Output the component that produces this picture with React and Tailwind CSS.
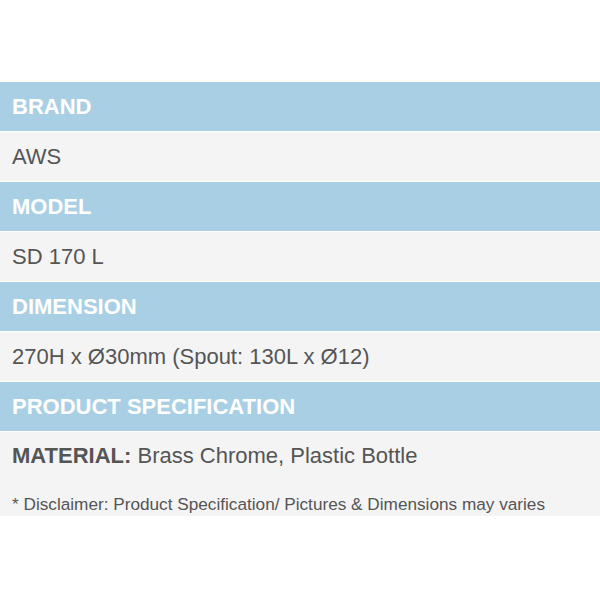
export default function App() {
  const Head = ({ children }) => (
    <div className="h-[50px] bg-[#a9cfe4] flex items-center px-3 text-white font-bold text-[22px] border-b border-white">{children}</div>
  );
  const Row = ({ children }) => (
    <div className="h-[50px] bg-[#f4f4f4] flex items-center px-3 text-[#555] text-[22px] border-b border-white">{children}</div>
  );
  return (
    <div className="w-[600px] h-[600px] bg-white pt-[82px]" style={{ fontFamily: '"Liberation Sans", Arial, sans-serif' }}>
      <Head>BRAND</Head>
      <Row>AWS</Row>
      <Head>MODEL</Head>
      <Row>SD 170 L</Row>
      <Head>DIMENSION</Head>
      <Row>270H x Ø30mm (Spout: 130L x Ø12)</Row>
      <Head>PRODUCT SPECIFICATION</Head>
      <div className="bg-[#f4f4f4] px-3 pt-[11px] h-[84px] text-[#555]">
        <div className="text-[22px] leading-[26px]"><span className="font-bold">MATERIAL:</span> Brass Chrome, Plastic Bottle</div>
        <div className="text-[17.2px] mt-[25px] leading-[20px]">* Disclaimer: Product Specification/ Pictures &amp; Dimensions may varies</div>
      </div>
    </div>
  );
}
